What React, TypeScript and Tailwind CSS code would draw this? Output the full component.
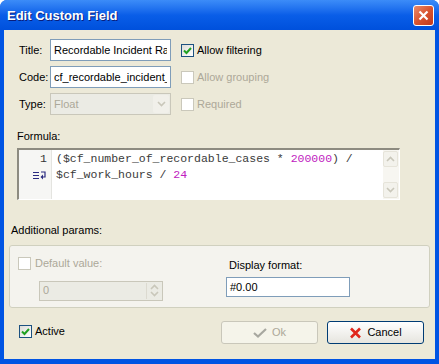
import React from "react";

const ui = { fontFamily: '"Liberation Sans", Arial, sans-serif' };
const mono = { fontFamily: '"Liberation Mono", "Courier New", monospace' };

function Check({ checked, disabled }: { checked?: boolean; disabled?: boolean }) {
  return (
    <span
      className={
        "flex h-[13px] w-[13px] shrink-0 items-center justify-center border " +
        (disabled
          ? "border-[#cac8bb] bg-white"
          : "border-[#1c5180] bg-gradient-to-br from-[#dcdcd7] to-white")
      }
    >
      {checked && (
        <svg width="9" height="9" viewBox="0 0 9 9">
          <path d="M1 4.5 L3.5 7 L8 2" fill="none" stroke="#21a121" strokeWidth="2" />
        </svg>
      )}
    </span>
  );
}

function Chevron({ up, color }: { up?: boolean; color: string }) {
  return (
    <svg width="9" height="6" viewBox="0 0 9 6">
      <path
        d={up ? "M1 5 L4.5 1.5 L8 5" : "M1 1 L4.5 4.5 L8 1"}
        fill="none"
        stroke={color}
        strokeWidth="1.6"
      />
    </svg>
  );
}

export default function App() {
  return (
    <div
      className="flex h-[364px] w-[439px] flex-col overflow-hidden rounded-t-[7px] bg-[#0054e3] text-[11px] text-black"
      style={ui}
    >
      {/* title bar */}
      <div className="flex h-[30px] shrink-0 items-center justify-between bg-gradient-to-b from-[#3c8cf8] via-[#0a5ee8] to-[#0050dc] pl-[7px] pr-[5px]">
        <span className="pt-[1px] text-[13px] font-bold text-white [text-shadow:1px_1px_0_#0a1e7a]">
          Edit Custom Field
        </span>
        <div className="flex h-[21px] w-[21px] items-center justify-center rounded-[3px] border border-white bg-gradient-to-br from-[#e88a6a] via-[#d9542f] to-[#c2381c]">
          <svg width="11" height="11" viewBox="0 0 11 11">
            <path d="M1.5 1.5 L9.5 9.5 M9.5 1.5 L1.5 9.5" stroke="white" strokeWidth="2.2" />
          </svg>
        </div>
      </div>

      {/* client area */}
      <div className="mx-[4px] mb-[5px] flex flex-1 flex-col bg-[#ece9d8]">
        <div className="flex flex-col gap-[5px] pl-[15px] pt-[9px]">
          <div className="flex h-[22px] items-center">
            <span className="w-[31px]">Title:</span>
            <input
              readOnly
              value="Recordable Incident Rate"
              className="h-[22px] w-[121px] border border-[#7f9db9] bg-white px-[3px] text-[11px] text-black outline-none"
              style={ui}
            />
            <span className="ml-[10px]"><Check checked /></span>
            <span className="ml-[3px]">Allow filtering</span>
          </div>
          <div className="flex h-[22px] items-center">
            <span className="w-[31px]">Code:</span>
            <input
              readOnly
              value="cf_recordable_incident_rate"
              className="h-[22px] w-[121px] border border-[#7f9db9] bg-white px-[3px] text-[11px] text-black outline-none"
              style={ui}
            />
            <span className="ml-[10px]"><Check disabled /></span>
            <span className="ml-[3px] text-[#aca899]">Allow grouping</span>
          </div>
          <div className="flex h-[22px] items-center">
            <span className="w-[31px]">Type:</span>
            <div className="flex h-[22px] w-[121px] items-center justify-between border border-[#c9c7ba] bg-[#ebebe4] pl-[3px] pr-[1px] text-[#aca899]">
              Float
              <div className="flex h-[18px] w-[16px] items-center justify-center rounded-[2px] bg-[#f1f0ea]">
                <Chevron color="#c9c7ba" />
              </div>
            </div>
            <span className="ml-[10px]"><Check disabled /></span>
            <span className="ml-[3px] text-[#aca899]">Required</span>
          </div>
        </div>

        <div className="ml-[13px] mt-[14px] h-[14px] leading-[14px]">Formula:</div>

        {/* formula editor */}
        <div className="ml-[13px] mt-[5px] flex h-[52px] w-[383px] border-b border-l-2 border-r border-t-2 border-b-white border-l-[#8d8b80] border-r-white border-t-[#8d8b80] bg-white">
          <div className="flex w-[33px] flex-col items-end border-r border-[#e4e4e0] bg-[#f6f6f4] pr-[4px] pt-[1px] text-[11.5px] leading-[16px] text-[#333]" style={mono}>
            <span>1</span>
            <span className="flex h-[16px] items-center">
              <svg width="14" height="9" viewBox="0 0 14 9">
                <path d="M0 1.5 H6 M0 4.5 H6 M0 7.5 H6" stroke="#2b2b80" strokeWidth="1" />
                <path d="M8 1 H12 V6 H9" fill="none" stroke="#2b2b80" strokeWidth="1.2" />
                <path d="M10 3.5 L7.5 6 L10 8.5 Z" fill="#2b2b80" />
              </svg>
            </span>
          </div>
          <div className="flex-1 whitespace-pre pl-[4px] pt-[1px] text-[11.5px] leading-[16px] text-[#3a3a3a]" style={mono}>
            <div>
              ($cf_number_of_recordable_cases * <span className="text-[#c020c0]">200000</span>) /
            </div>
            <div>
              $cf_work_hours / <span className="text-[#c020c0]">24</span>
            </div>
          </div>
          <div className="flex w-[16px] flex-col justify-between bg-[#f7f6f1] py-[1px]">
            <div className="flex h-[16px] w-[15px] items-center justify-center rounded-[2px] border border-[#e6e4da] bg-[#f3f2ec]">
              <Chevron up color="#c9c7ba" />
            </div>
            <div className="flex h-[16px] w-[15px] items-center justify-center rounded-[2px] border border-[#e6e4da] bg-[#f3f2ec]">
              <Chevron color="#c9c7ba" />
            </div>
          </div>
        </div>

        <div className="ml-[7px] mt-[23px] h-[14px] leading-[14px]">Additional params:</div>

        {/* group box */}
        <div className="ml-[5px] mt-[8px] flex h-[63px] w-[421px] rounded-[3px] border border-[#d0d0bf] bg-[#f4f3ee]">
          <div className="flex w-[216px] flex-col pl-[8px] pt-[9px]">
            <div className="flex items-center">
              <Check disabled />
              <span className="ml-[4px] text-[#aca899]">Default value:</span>
            </div>
            <div className="ml-[21px] mt-[9px] flex h-[20px] w-[124px] items-center justify-between border border-[#c9c7ba] bg-[#ebebe4] pl-[3px] pr-[1px] text-[#aca899]">
              0
              <div className="flex h-[16px] w-[15px] flex-col items-center justify-center gap-[1px] border-l border-[#dcdad0]">
                <Chevron up color="#c9c7ba" />
                <Chevron color="#c9c7ba" />
              </div>
            </div>
          </div>
          <div className="flex flex-col pt-[12px]">
            <span className="ml-[3px] h-[14px] leading-[14px]">Display format:</span>
            <div className="mt-[5px] flex h-[20px] w-[124px] items-center border border-[#7f9db9] bg-white px-[3px]">
              #0.00
            </div>
          </div>
        </div>

        {/* bottom */}
        <div className="mt-[13px] flex items-start pl-[15px]">
          <div className="mt-[2px] flex items-center">
            <Check checked />
            <span className="ml-[3px]">Active</span>
          </div>
          <div className="ml-auto mr-[11px] flex gap-[9px]">
            <div className="flex h-[23px] w-[97px] items-center justify-center gap-[5px] rounded-[3px] border border-[#c9c7ba] bg-[#f5f4ea] text-[#aca899]">
              <svg width="14" height="10" viewBox="0 0 14 10">
                <path d="M1 5 L5 8.5 L13 1" fill="none" stroke="#a8a8a0" strokeWidth="2.2" />
              </svg>
              Ok
            </div>
            <div className="flex h-[23px] w-[97px] items-center justify-center gap-[5px] rounded-[3px] border border-[#003c74] bg-gradient-to-b from-white to-[#e6e5df]">
              <svg width="13" height="12" viewBox="0 0 13 12">
                <path d="M2 1.5 L11 10.5 M11 1.5 L2 10.5" stroke="#e0261c" strokeWidth="2.6" />
              </svg>
              Cancel
            </div>
          </div>
        </div>
      </div>
    </div>
  );
}
